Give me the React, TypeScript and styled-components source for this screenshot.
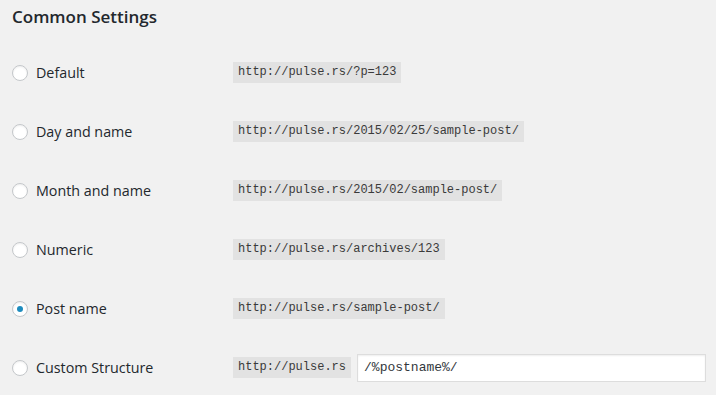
import React from "react";
import styled, { createGlobalStyle } from "styled-components";

const Global = createGlobalStyle`
  html, body { margin: 0; padding: 0; background: #f1f1f1; }
  body { font-family: "Open Sans", "Noto Sans", sans-serif; color: #23282d; }
`;

const Page = styled.div`
  padding: 0 10px 0 12px;
  width: 716px;
  box-sizing: border-box;
`;

const Heading = styled.h2`
  margin: 0;
  padding-top: 4px;
  height: 38px;
  font-size: 17px;
  font-weight: 600;
  line-height: 26px;
  color: #23282d;
`;

const List = styled.div`
  display: grid;
  grid-template-columns: 221px 1fr;
  grid-auto-rows: 59px;
  padding-top: 1px;
`;

const Label = styled.label`
  display: flex;
  align-items: center;
  gap: 8px;
  font-size: 14.3px;
  color: #23282d;
`;

const Radio = styled.span<{ $checked?: boolean }>`
  width: 16px;
  height: 16px;
  box-sizing: border-box;
  border-radius: 50%;
  border: 1px solid #c4c7ca;
  background: #fff;
  box-shadow: inset 0 1px 2px rgba(0, 0, 0, 0.07);
  display: flex;
  align-items: center;
  justify-content: center;
  &::after {
    content: "";
    display: ${(p) => (p.$checked ? "block" : "none")};
    width: 6px;
    height: 6px;
    border-radius: 50%;
    background: #1e8cbe;
  }
`;

const Value = styled.div`
  display: flex;
  align-items: center;
  gap: 6px;
`;

const Code = styled.code`
  font-family: "Liberation Mono", monospace;
  font-size: 12px;
  line-height: 15px;
  padding: 3px 5px 3px 5px;
  background: #e2e2e2;
  color: #3a3a3a;
`;

const Input = styled.input`
  flex: 1;
  height: 28px;
  box-sizing: border-box;
  border: 1px solid #ddd;
  background: #fff;
  box-shadow: inset 0 1px 2px rgba(0, 0, 0, 0.07);
  font-family: "Liberation Mono", monospace;
  font-size: 13px;
  color: #32373c;
  padding: 0 6px;
  outline: none;
`;

const rows = [
  { label: "Default", url: "http://pulse.rs/?p=123" },
  { label: "Day and name", url: "http://pulse.rs/2015/02/25/sample-post/" },
  { label: "Month and name", url: "http://pulse.rs/2015/02/sample-post/" },
  { label: "Numeric", url: "http://pulse.rs/archives/123" },
  { label: "Post name", url: "http://pulse.rs/sample-post/", checked: true },
];

export default function App() {
  return (
    <Page>
      <Global />
      <Heading>Common Settings</Heading>
      <List>
        {rows.map((r) => (
          <React.Fragment key={r.label}>
            <Label>
              <Radio $checked={r.checked} />
              {r.label}
            </Label>
            <Value>
              <Code>{r.url}</Code>
            </Value>
          </React.Fragment>
        ))}
        <Label>
          <Radio />
          Custom Structure
        </Label>
        <Value>
          <Code>http://pulse.rs</Code>
          <Input defaultValue="/%postname%/" />
        </Value>
      </List>
    </Page>
  );
}
